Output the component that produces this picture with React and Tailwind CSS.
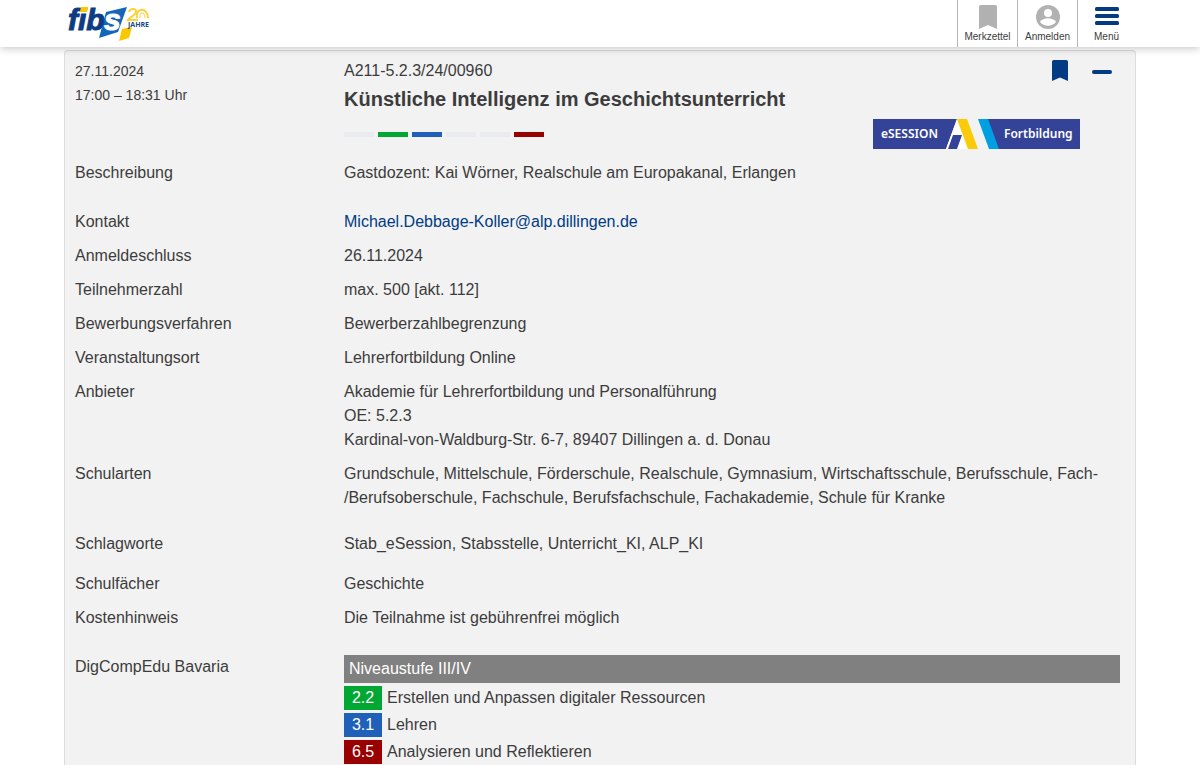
import { Fragment } from 'react';

const LEVELS = [
  'bg-[#e9ebee]',
  'bg-[#00a833]',
  'bg-[#1f60b8]',
  'bg-[#e9ebee]',
  'bg-[#e9ebee]',
  'bg-[#990000]',
];

// the zero-width space lets "Fach-/Berufsoberschule" break after its hyphen
const DETAILS = [
  { label: 'Beschreibung', lines: ['Gastdozent: Kai Wörner, Realschule am Europakanal, Erlangen'], space: 'mb-[25px]' },
  { label: 'Kontakt', mail: 'Michael.Debbage-Koller@alp.dillingen.de', space: 'mb-[10px]' },
  { label: 'Anmeldeschluss', lines: ['26.11.2024'], space: 'mb-[10px]' },
  { label: 'Teilnehmerzahl', lines: ['max. 500 [akt. 112]'], space: 'mb-[10px]' },
  { label: 'Bewerbungsverfahren', lines: ['Bewerberzahlbegrenzung'], space: 'mb-[10px]' },
  { label: 'Veranstaltungsort', lines: ['Lehrerfortbildung Online'], space: 'mb-[10px]' },
  {
    label: 'Anbieter',
    lines: [
      'Akademie für Lehrerfortbildung und Personalführung',
      'OE: 5.2.3',
      'Kardinal-von-Waldburg-Str. 6-7, 89407 Dillingen a. d. Donau',
    ],
    space: 'mb-[10px]',
  },
  {
    label: 'Schularten',
    lines: [
      'Grundschule, Mittelschule, Förderschule, Realschule, Gymnasium, Wirtschaftsschule, Berufsschule, Fach-\u200b/Berufsoberschule, Fachschule, Berufsfachschule, Fachakademie, Schule für Kranke',
    ],
    space: 'mb-[22px]',
  },
  { label: 'Schlagworte', lines: ['Stab_eSession, Stabsstelle, Unterricht_KI, ALP_KI'], space: 'mb-4' },
  { label: 'Schulfächer', lines: ['Geschichte'], space: 'mb-[10px]' },
  { label: 'Kostenhinweis', lines: ['Die Teilnahme ist gebührenfrei möglich'], space: 'mb-[25px]' },
];

const SKILLS = [
  { code: '2.2', name: 'Erstellen und Anpassen digitaler Ressourcen', color: 'bg-[#00a833]' },
  { code: '3.1', name: 'Lehren', color: 'bg-[#1f60b8]' },
  { code: '6.5', name: 'Analysieren und Reflektieren', color: 'bg-[#990000]' },
];

function Logo() {
  return (
    <svg width="84" height="42" viewBox="0 -4 84 42" className="block" role="img" aria-label="fibs 20 Jahre">
      <path d="M39 8 L60 3 L51 28 L32 34 Z" fill="#1467b8" />
      <path d="M55 25 L65 23 L62 34 L52 37 Z" fill="#fbc800" />
      <g fontFamily="Liberation Sans, sans-serif" fontWeight="bold" fontStyle="italic" fontSize="30" strokeWidth="1">
        <text x="1" y="26" fill="#0c3c82" stroke="#0c3c82">fib</text>
        <text x="37" y="26" fill="#fff" stroke="#fff">s</text>
      </g>
      <path d="M14 3 H21 L20 8 H13 Z" fill="#fbc800" />
      <text x="61" y="23" fontFamily="Open Sans, sans-serif" fontWeight="700" fontSize="7" fill="#174a8b">JAHRE</text>
      <g fill="none" stroke="#fbd23c" strokeWidth="2">
        <path d="M62 8 C63 4 70 4 69 8 C68 12 63 13 61 16 H71" />
        <path d="M70 14 C68 3 81 3 81 14" />
        <path d="M73 14 C72 7 78 7 78 14" strokeWidth="1" />
      </g>
    </svg>
  );
}

function Bookmark({ className }) {
  return (
    <svg viewBox="0 0 18 24" preserveAspectRatio="none" className={className} fill="currentColor" aria-hidden="true">
      <path d="M2 0 H16 Q18 0 18 2 V24 L9 20 L0 24 V2 Q0 0 2 0 Z" />
    </svg>
  );
}

function SessionBadge() {
  return (
    <svg width="207" height="30" viewBox="0 0 207 30" className="block" role="img" aria-label="eSESSION Fortbildung">
      <path d="M0 0 H84 L73 30 H0 Z" fill="#344397" />
      <path d="M114 0 H207 V30 H125 Z" fill="#344397" />
      <path d="M84 0 L73 30 H95 L89 14 Z" fill="#fff" />
      <path d="M84 0 H94 L105 30 H95 Z" fill="#fbcb09" />
      <path d="M80 16 H89 L84 30 H75 Z" fill="#344397" />
      <path d="M105 0 H115 L126 30 H116 Z" fill="#009fe3" />
      <g fontFamily="Noto Sans, sans-serif" fontWeight="600" fontSize="12" fill="#fff">
        <text x="8" y="19">eSESSION</text>
        <text x="131" y="19">Fortbildung</text>
      </g>
    </svg>
  );
}

function NavButton({ label, children }) {
  return (
    <button type="button" className="flex w-15 flex-col items-center border-l border-[#b5b5b5] pt-[5px] text-[10px] leading-4 last:w-[58px]">
      <span className="flex h-6 items-center">{children}</span>
      {label}
    </button>
  );
}

export default function App() {
  return (
    <div className="flex min-h-screen flex-col bg-white font-['Liberation_Sans',sans-serif] text-base leading-6 text-[#3c3c3c]">
      <header className="relative bg-white shadow-[0_1px_8px_rgba(0,0,0,0.25)]">
        <div className="mx-[65px] flex h-[47px] justify-between">
          <a href="#" className="pl-[2px]"><Logo /></a>
          <nav className="flex">
            <NavButton label="Merkzettel">
              <Bookmark className="h-6 w-[18px] text-[#b1b1b1]" />
            </NavButton>
            <NavButton label="Anmelden">
              <svg width="24" height="24" viewBox="0 0 24 24" aria-hidden="true">
                <circle cx="12" cy="12" r="12" fill="#b1b1b1" />
                <circle cx="12" cy="8" r="4" fill="#fff" />
                <path d="M4 17 C7 12 17 12 20 17 C16 22 8 22 4 17 Z" fill="#fff" />
              </svg>
            </NavButton>
            <NavButton label="Menü">
              <svg width="24" height="20" viewBox="0 0 24 20" fill="#003b84" aria-hidden="true">
                <rect width="24" height="4" rx="1.5" />
                <rect y="7" width="24" height="4" rx="1.5" />
                <rect y="14" width="24" height="4" rx="1.5" />
              </svg>
            </NavButton>
          </nav>
        </div>
      </header>

      <main className="mx-16 mt-[3px] flex-1 rounded-t-sm border border-b-0 border-[#dcdcdc] bg-[#f2f2f2] pt-2 pr-[15px] pl-[10px]">
        <div className="mb-3 flex">
          <div className="w-[269px] shrink-0 text-sm leading-6">
            <p>27.11.2024</p>
            <p>17:00 – 18:31 Uhr</p>
          </div>
          <div className="flex-1">
            <div className="flex justify-between">
              <div>
                <p>A211-5.2.3/24/00960</p>
                <h1 className="pt-1 pb-1 text-xl leading-6 font-bold">Künstliche Intelligenz im Geschichtsunterricht</h1>
              </div>
              <div className="flex items-start gap-6 pt-px pr-2 text-[#003b84]">
                <button type="button" aria-label="Merken"><Bookmark className="h-[21px] w-4" /></button>
                <button type="button" aria-label="Zuklappen" className="flex h-6 items-center">
                  <span className="h-1 w-5 rounded-full bg-current" />
                </button>
              </div>
            </div>
            <div className="flex items-center justify-between pt-1 pr-10">
              <div className="flex gap-1">
                {LEVELS.map((color, i) => (
                  <span key={i} className={`h-[5px] w-[30px] ${color}`} />
                ))}
              </div>
              <SessionBadge />
            </div>
          </div>
        </div>

        <dl className="grid grid-cols-[269px_1fr]">
          {DETAILS.map(({ label, lines, mail, space }) => (
            <Fragment key={label}>
              <dt>{label}</dt>
              <dd className={space}>
                {mail && <a href={`mailto:${mail}`} className="text-[#003b84]">{mail}</a>}
                {lines?.map((line) => <p key={line}>{line}</p>)}
              </dd>
            </Fragment>
          ))}
          <dt>DigCompEdu Bavaria</dt>
          <dd>
            <p className="mb-[3px] bg-[#808080] px-[5px] py-[2px] text-white">Niveaustufe III/IV</p>
            <ul className="flex flex-col gap-[3px]">
              {SKILLS.map(({ code, name, color }) => (
                <li key={code} className="flex gap-[5px]">
                  <span className={`w-[38px] text-center text-white ${color}`}>{code}</span>
                  {name}
                </li>
              ))}
            </ul>
          </dd>
        </dl>
      </main>
    </div>
  );
}
